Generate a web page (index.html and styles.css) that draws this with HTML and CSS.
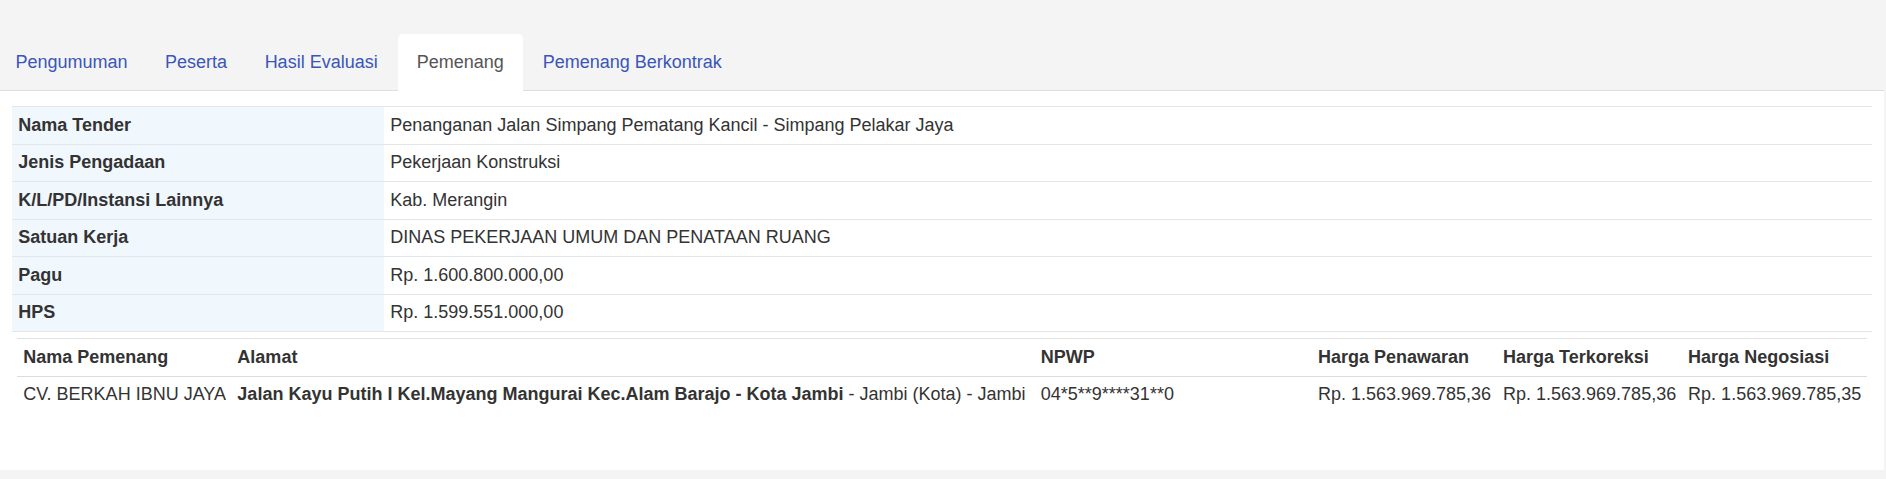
FILE: index.html
```html
<!DOCTYPE html>
<html lang="id">

<head>
    <meta charset="UTF-8">
    <meta name="viewport" content="width=device-width, initial-scale=1.0">
    <title>Pemenang</title>
    <link rel="stylesheet" href="styles.css">
</head>

<body>
    <div class="page">
        <ul class="tabs">
            <li><a href="#">Pengumuman</a></li>
            <li><a href="#">Peserta</a></li>
            <li><a href="#">Hasil Evaluasi</a></li>
            <li class="active"><a href="#">Pemenang</a></li>
            <li><a href="#">Pemenang Berkontrak</a></li>
        </ul>

        <div class="tab-content">
            <table class="info">
                <tr>
                    <th>Nama Tender</th>
                    <td>Penanganan Jalan Simpang Pematang Kancil - Simpang Pelakar Jaya</td>
                </tr>
                <tr>
                    <th>Jenis Pengadaan</th>
                    <td>Pekerjaan Konstruksi</td>
                </tr>
                <tr>
                    <th>K/L/PD/Instansi Lainnya</th>
                    <td>Kab. Merangin</td>
                </tr>
                <tr>
                    <th>Satuan Kerja</th>
                    <td>DINAS PEKERJAAN UMUM DAN PENATAAN RUANG</td>
                </tr>
                <tr>
                    <th>Pagu</th>
                    <td>Rp. 1.600.800.000,00</td>
                </tr>
                <tr>
                    <th>HPS</th>
                    <td>Rp. 1.599.551.000,00</td>
                </tr>
                <tr>
                    <td colspan="2" class="nested">
                        <!-- daftar pemenang -->
                        <table class="winners">
                            <thead>
                                <tr>
                                    <th class="c-nama">Nama Pemenang</th>
                                    <th class="c-alamat">Alamat</th>
                                    <th class="c-npwp">NPWP</th>
                                    <th class="c-harga">Harga Penawaran</th>
                                    <th class="c-harga">Harga Terkoreksi</th>
                                    <th class="c-harga">Harga Negosiasi</th>
                                </tr>
                            </thead>
                            <tbody>
                                <tr>
                                    <td>CV. BERKAH IBNU JAYA</td>
                                    <td><b>Jalan Kayu Putih I Kel.Mayang Mangurai Kec.Alam Barajo - Kota Jambi</b> - Jambi (Kota) - Jambi</td>
                                    <td>04*5**9****31**0</td>
                                    <td>Rp. 1.563.969.785,36</td>
                                    <td>Rp. 1.563.969.785,36</td>
                                    <td>Rp. 1.563.969.785,35</td>
                                </tr>
                            </tbody>
                        </table>
                    </td>
                </tr>
            </table>
        </div>
    </div>
</body>

</html>
```

FILE: styles.css
```css
body {
    margin: 0;
    background: #f4f4f4;
    font-family: "Liberation Sans", Arial, sans-serif;
    font-size: 18px;
    line-height: 25px;
    color: #333;
}

.page {
    margin-right: 2px;
}

/* tab bar */
.tabs {
    list-style: none;
    margin: 0;
    padding: 34px 0 0;
    display: flex;
    border-bottom: 1px solid #dedede;
}

.tabs li {
    margin-right: 2.5px;
    margin-bottom: -1px;
}

.tabs li:first-child {
    margin-left: -2px;
}

.tabs a {
    display: block;
    padding: 16px 17.5px;
    color: #3a56b8;
    text-decoration: none;
    border-radius: 5px 5px 0 0;
}

.tabs .active a {
    background: #fff;
    color: #555;
    padding: 16px 19px;
}

.tab-content {
    background: #fff;
    padding: 15px 12px 57px;
}

table {
    border-collapse: collapse;
    width: 100%;
}

th,
td {
    box-sizing: border-box;
}

.info th,
.info td {
    text-align: left;
    vertical-align: top;
    padding: 5.75px 6.25px;
    border-top: 1px solid #e2e6ea;
}

.info th {
    width: 20%;
    background: #f0f7fd;
    font-weight: bold;
}

.info td.nested {
    padding: 6px 5px 0;
}

/* tabel pemenang */
.winners {
    table-layout: fixed;
}

.winners th,
.winners td {
    text-align: left;
    white-space: nowrap;
    padding: 5.75px 6.25px;
    border: 0;
    background: none;
}

.winners thead th {
    font-weight: bold;
    border-top: 1px solid #e2e2e2;
    border-bottom: 1px solid #dcdcdc;
    width: auto;
}

.winners .c-nama {
    width: 214px;
}

.winners .c-alamat {
    width: 803px;
}

.winners .c-npwp {
    width: 277px;
}

.winners .c-harga {
    width: 185px;
}
```
